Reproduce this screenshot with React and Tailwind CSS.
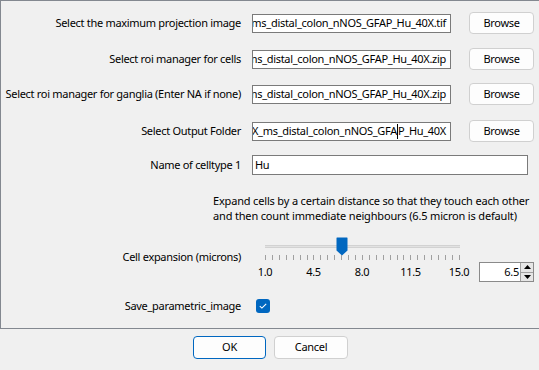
import React from 'react';

const FONT = { fontFamily: '"Noto Sans", "Open Sans", sans-serif', letterSpacing: '-0.3px' };

function PathField({ text, caretAt }) {
  return (
    <div className="ml-[11px] w-[199px] h-[19px] bg-white border border-[#7a7a7a] flex justify-end items-center overflow-hidden pr-[4px] whitespace-nowrap">
      {caretAt == null ? (
        <span>{text}</span>
      ) : (
        <span>
          {text.slice(0, caretAt)}
          <span className="inline-block w-px h-[15px] bg-black align-middle" />
          {text.slice(caretAt)}
        </span>
      )}
    </div>
  );
}

function BrowseRow({ label, text, caretAt, mt }) {
  return (
    <div className={`flex items-center h-[22px] ${mt}`}>
      <div className="w-[240px] text-right whitespace-nowrap">{label}</div>
      <PathField text={text} caretAt={caretAt} />
      <button className="ml-[18px] w-[65px] h-[22px] bg-[#fdfdfd] border border-[#d0d0d0] rounded-[4px]">
        Browse
      </button>
    </div>
  );
}

function Slider() {
  const ticks = Array.from({ length: 29 });
  const labels = ['1.0', '4.5', '8.0', '11.5', '15.0'];
  return (
    <div className="relative w-[210px] h-[46px] ml-[15px]">
      {/* track */}
      <div className="absolute left-[9px] top-[8px] w-[195px] h-[3px] bg-[#e2e2e2] border-y border-[#d2d2d2]" />
      {/* thumb */}
      <svg className="absolute left-[80px] top-0" width="12" height="19" viewBox="0 0 12 19">
        <path d="M1 0.5 H11 a0.5 0.5 0 0 1 0.5 0.5 V13.5 L6 18.5 L0.5 13.5 V1 a0.5 0.5 0 0 1 0.5 -0.5 Z" fill="#0067c0" />
      </svg>
      {/* ticks */}
      <div className="absolute left-[9px] top-[18px] w-[195px] flex justify-between">
        {ticks.map((_, i) => (
          <div key={i} className="w-px h-[5px] bg-[#a0a0a0]" />
        ))}
      </div>
      {/* labels */}
      <div className="absolute left-[-6px] top-[27px] w-[224px] flex justify-between">
        {labels.map((l) => (
          <div key={l} className="w-[30px] text-center">{l}</div>
        ))}
      </div>
    </div>
  );
}

function SpinBox() {
  return (
    <div className="ml-[13px] mt-[25px] w-[55px] h-[20px] bg-white border border-[#8a8a8a] flex">
      <div className="flex-1 text-right pr-[1px] leading-[18px]">6.5</div>
      <div className="w-[13px] flex flex-col border-l border-[#a0a0a0]">
        <div className="flex-1 bg-[#e6e6e6] border-b border-[#a0a0a0] flex items-center justify-center">
          <svg width="7" height="4" viewBox="0 0 7 4"><path d="M0 4 L3.5 0 L7 4 Z" fill="#000" /></svg>
        </div>
        <div className="flex-1 bg-[#e6e6e6] flex items-center justify-center">
          <svg width="7" height="4" viewBox="0 0 7 4"><path d="M0 0 L3.5 4 L7 0 Z" fill="#000" /></svg>
        </div>
      </div>
    </div>
  );
}

export default function App() {
  return (
    <div className="w-[539px] h-[370px] bg-[#f0f0f0] text-[11px] text-black overflow-hidden" style={FONT}>
      <div className="h-[329px] border-t border-l border-b border-[#838890] pt-[11px]">
        <BrowseRow label="Select the maximum projection image" text="4_ms_distal_colon_nNOS_GFAP_Hu_40X.tif" mt="" />
        <BrowseRow label="Select roi manager for cells" text="4_ms_distal_colon_nNOS_GFAP_Hu_40X.zip" mt="mt-[14px]" />
        <BrowseRow label="Select roi manager for ganglia (Enter NA if none)" text="4_ms_distal_colon_nNOS_GFAP_Hu_40X.zip" mt="mt-[13px]" />
        <BrowseRow label="Select Output Folder" text="4X_ms_distal_colon_nNOS_GFAP_Hu_40X" caretAt={27} mt="mt-[15px]" />

        <div className="flex items-center h-[20px] mt-[13px]">
          <div className="w-[240px] text-right">Name of celltype 1</div>
          <div className="ml-[11px] w-[276px] h-[20px] bg-white border border-[#7a7a7a] pl-[2px] leading-[18px]">Hu</div>
        </div>

        <div className="ml-[212px] mt-[18px] leading-[15px] whitespace-nowrap tracking-[-0.17px]">
          <div>Expand cells by a certain distance so that they touch each other</div>
          <div>and then count immediate neighbours (6.5 micron is default)</div>
        </div>

        <div className="flex mt-[14px]">
          <div className="w-[240px] text-right pt-[12px]">Cell expansion (microns)</div>
          <Slider />
          <SpinBox />
        </div>

        <div className="flex items-center h-[16px] mt-[15px]">
          <div className="w-[240px] text-right">Save_parametric_image</div>
          <div className="ml-[15px] w-[14px] h-[14px] rounded-[3px] bg-[#0067c0] flex items-center justify-center">
            <svg width="8" height="6" viewBox="0 0 8 6">
              <path d="M0.8 3.2 L2.9 5.1 L7.2 0.8" stroke="#ffffff" strokeWidth="1.1" fill="none" />
            </svg>
          </div>
        </div>
      </div>

      <div className="flex gap-[8px] mt-[7px] pl-[193px]">
        <button className="w-[73px] h-[23px] bg-[#fdfdfd] border border-[#0067c0] rounded-[4px]">OK</button>
        <button className="w-[74px] h-[23px] bg-[#fdfdfd] border border-[#d0d0d0] rounded-[4px]">Cancel</button>
      </div>
    </div>
  );
}
